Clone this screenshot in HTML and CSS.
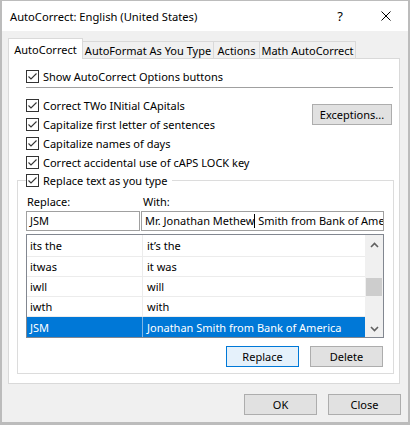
FILE: index.html
```html
<!DOCTYPE html>
<html lang="en">
<head>
<meta charset="utf-8">
<title>AutoCorrect</title>
<link rel="stylesheet" href="styles.css">
</head>
<body>
<div class="window">
  <div class="titlebar">
    <span class="title">AutoCorrect: English (United States)</span>
    <span class="help">?</span>
    <span class="close"><svg width="10" height="10" viewBox="0 0 10 10"><path d="M0.5 0.5 L9.5 9.5 M9.5 0.5 L0.5 9.5" stroke="#000" stroke-width="1" fill="none"/></svg></span>
  </div>
  <div class="body">
    <div class="tabs">
      <div class="tab active">AutoCorrect</div>
      <div class="tab t2">AutoFormat As You Type</div>
      <div class="tab t3">Actions</div>
      <div class="tab t4">Math AutoCorrect</div>
    </div>
    <div class="pane">
      <div class="check-row">
        <span class="cb"><svg width="11" height="11" viewBox="0 0 11 11"><polyline points="1.5,5.5 4,8 9.5,2.5" fill="none" stroke="#333" stroke-width="1.1"/></svg></span>
        <span>Show AutoCorrect Options buttons</span>
      </div>
      <div class="sep"></div>
      <div class="opts">
        <div class="opt-list">
          <div class="check-row">
            <span class="cb"><svg width="11" height="11" viewBox="0 0 11 11"><polyline points="1.5,5.5 4,8 9.5,2.5" fill="none" stroke="#333" stroke-width="1.1"/></svg></span>
            <span>Correct TWo INitial CApitals</span>
          </div>
          <div class="check-row">
            <span class="cb"><svg width="11" height="11" viewBox="0 0 11 11"><polyline points="1.5,5.5 4,8 9.5,2.5" fill="none" stroke="#333" stroke-width="1.1"/></svg></span>
            <span>Capitalize first letter of sentences</span>
          </div>
          <div class="check-row">
            <span class="cb"><svg width="11" height="11" viewBox="0 0 11 11"><polyline points="1.5,5.5 4,8 9.5,2.5" fill="none" stroke="#333" stroke-width="1.1"/></svg></span>
            <span>Capitalize names of days</span>
          </div>
          <div class="check-row">
            <span class="cb"><svg width="11" height="11" viewBox="0 0 11 11"><polyline points="1.5,5.5 4,8 9.5,2.5" fill="none" stroke="#333" stroke-width="1.1"/></svg></span>
            <span>Correct accidental use of cAPS LOCK key</span>
          </div>
        </div>
        <button class="btn exceptions">Exceptions...</button>
      </div>
      <div class="group">
        <div class="check-row legend">
          <span class="cb"><svg width="11" height="11" viewBox="0 0 11 11"><polyline points="1.5,5.5 4,8 9.5,2.5" fill="none" stroke="#333" stroke-width="1.1"/></svg></span>
          <span>Replace text as you type</span>
        </div>
        <div class="fields">
          <div class="label l1">Replace:</div>
          <div class="label l2">With:</div>
          <div class="input i1">JSM</div>
          <div class="input i2">Mr. Jonathan Methew<span class="caret"></span> Smith from Bank of America</div>
        </div>
        <div class="list">
          <div class="rows">
            <div class="row first"><div class="c1">its the</div><div class="c2">it’s the</div></div>
            <div class="row"><div class="c1">itwas</div><div class="c2">it was</div></div>
            <div class="row"><div class="c1">iwll</div><div class="c2">will</div></div>
            <div class="row"><div class="c1">iwth</div><div class="c2">with</div></div>
            <div class="row selected"><div class="c1">JSM</div><div class="c2">Jonathan Smith from Bank of America</div></div>
          </div>
          <div class="scrollbar">
            <div class="sb-btn up"><svg width="9" height="6" viewBox="0 0 9 6"><polyline points="1,5 4.5,1.5 8,5" fill="none" stroke="#606060" stroke-width="1.6"/></svg></div>
            <div class="sb-track"><div class="thumb"></div></div>
            <div class="sb-btn down"><svg width="9" height="6" viewBox="0 0 9 6"><polyline points="1,1 4.5,4.5 8,1" fill="none" stroke="#606060" stroke-width="1.6"/></svg></div>
          </div>
        </div>
        <div class="group-btns">
          <button class="btn default">Replace</button>
          <button class="btn">Delete</button>
        </div>
      </div>
    </div>
    <div class="footer">
      <button class="btn">OK</button>
      <button class="btn">Close</button>
    </div>
  </div>
</div>
</body>
</html>
```
FILE: styles.css
```css
* { box-sizing: border-box; }
body { margin: 0; }
.window {
  width: 410px;
  height: 425px;
  border-style: solid;
  border-color: #bcbcbc;
  border-width: 1px 2px 3px 2px;
  background: #f0f0f0;
  display: flex;
  flex-direction: column;
  font-family: "Noto Sans", "Open Sans", sans-serif;
  font-size: 11px;
  color: #000;
}
.titlebar {
  height: 30px;
  flex: none;
  background: #fff;
  display: flex;
  align-items: center;
}
.title { flex: 1; padding-left: 8px; font-size: 11.2px; }
.help { width: 46px; text-align: center; font-size: 13px; }
.close { width: 45px; display: flex; justify-content: center; align-items: center; }
.body {
  flex: 1;
  padding: 7px 7px 0 6px;
  display: flex;
  flex-direction: column;
}
.tabs {
  display: flex;
  align-items: flex-end;
  height: 21px;
  margin-bottom: -1px;
  position: relative;
  z-index: 1;
}
.tab {
  height: 17px;
  margin-bottom: 1px;
  border-top: 1px solid #d9d9d9;
  border-right: 1px solid #d9d9d9;
  background: #f0f0f0;
  display: flex;
  align-items: center;
  justify-content: center;
  white-space: nowrap;
}
.tab.active {
  width: 75px;
  height: 21px;
  margin-bottom: 0;
  border: 1px solid #d9d9d9;
  border-bottom: none;
  background: #fff;
}
.tab.t2 { width: 131px; }
.tab.t3 { width: 46px; }
.tab.t4 { width: 96px; }
.pane {
  width: 392px;
  border: 1px solid #d9d9d9;
  background: #fff;
  padding: 8px 6px 9px 17px;
}
.check-row {
  display: flex;
  align-items: center;
  height: 19px;
  gap: 4px;
  white-space: nowrap;
}
.cb {
  width: 13px;
  height: 13px;
  flex: none;
  border: 1px solid #333;
  background: #fff;
  display: flex;
}
.sep { height: 1px; background: #a0a0a0; margin-top: 1px; }
.opts { display: flex; justify-content: space-between; margin-top: 8px; }
.btn {
  font: inherit;
  color: #000;
  width: 73px;
  height: 21px;
  padding: 0;
  background: #e1e1e1;
  border: 1px solid #adadad;
}
.btn.default { background: #e5f1fb; border-color: #0078d7; }
.btn.exceptions { width: 80px; margin-top: 8px; margin-right: 1px; }
.group {
  margin-top: 8px;
  margin-left: -9px;
  width: 377px;
  border: 1px solid #dcdcdc;
  padding: 0 9px 6px 8px;
}
.legend {
  margin-top: -10px;
  width: max-content;
  background: #fff;
  padding-right: 4px;
}
.fields {
  display: grid;
  grid-template-columns: 114px 243px;
  column-gap: 1px;
  margin-top: 4px;
}
.label { height: 17px; line-height: 15px; }
.l1 { padding-left: 1px; }
.l2 { padding-left: 2px; }
.input {
  height: 20px;
  border: 1px solid #a0a0a0;
  padding-left: 3px;
  line-height: 18px;
  overflow: hidden;
  white-space: pre;
}
.caret {
  display: inline-block;
  width: 1px;
  height: 14px;
  background: #000;
  vertical-align: -3px;
}
.list {
  margin-top: 3px;
  height: 104px;
  border: 1px solid #828790;
  display: flex;
}
.rows { width: 338px; }
.row {
  display: flex;
  height: 20px;
  border-bottom: 1px solid #ececec;
  white-space: nowrap;
}
.row.first { height: 22px; }
.row.selected { background: #0078d7; color: #fff; border-bottom: none; }
.c1 {
  width: 116px;
  padding-left: 3px;
  border-right: 1px solid #ececec;
  display: flex;
  align-items: center;
}
.c2 { flex: 1; padding-left: 4px; display: flex; align-items: center; overflow: hidden; }
.row.selected .c1 { border-right-color: #7fb6e6; }
.scrollbar {
  width: 18px;
  background: #f0f0f0;
  display: flex;
  flex-direction: column;
}
.sb-btn { display: flex; justify-content: center; align-items: center; }
.sb-btn.up { height: 20px; }
.sb-btn.down { height: 17px; }
.sb-track { flex: 1; padding: 23px 1px 0 1px; }
.thumb { height: 18px; background: #cdcdcd; }
.group-btns {
  display: flex;
  justify-content: flex-end;
  gap: 11px;
  margin-top: 8px;
  padding-right: 1px;
}
.footer {
  display: flex;
  justify-content: flex-end;
  gap: 11px;
  margin-top: 10px;
}
```
